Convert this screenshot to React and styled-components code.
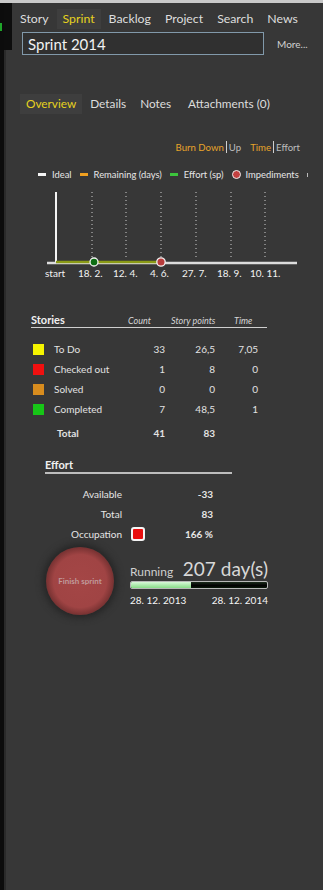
import React from 'react';
import styled, { createGlobalStyle } from 'styled-components';

const GlobalStyle = createGlobalStyle`
  html, body {
    margin: 0;
    padding: 0;
    background: #373737;
  }
  body {
    font-family: Lato, "Open Sans", "Liberation Sans", sans-serif;
    color: #dcdcdc;
  }
`;

const Frame = styled.div`
  display: flex;
  flex-direction: column;
  width: 323px;
  height: 890px;
  overflow: hidden;
  background: #c9c9c9;
  padding-top: 3px;
  box-sizing: border-box;
`;

const Body = styled.div`
  flex: 1;
  display: flex;
`;

const Rail = styled.div`
  width: 4px;
  background: #0c0c0c;
  position: relative;
  &::before {
    content: '';
    position: absolute;
    left: 0;
    top: 20px;
    width: 2px;
    height: 8px;
    background: #1fa52a;
  }
`;

const Panel = styled.div`
  flex: 1;
  position: relative;
  background: #373737;
  border-left: 2px solid #2a2a2a;
  &::before {
    content: '';
    position: absolute;
    left: -2px;
    top: 0;
    width: 8px;
    height: 47px;
    background: #0d0d0d;
  }
`;

const Nav = styled.nav`
  display: flex;
  gap: ${p => p.$gap ?? 2}px;
  padding: 4px 0 0 8px;
  height: 24px;
  align-items: center;
`;

const Tab = styled.div`
  font-size: ${p => p.$size || 12.3}px;
  padding: 2px 6px 3px;
  margin-left: ${p => p.$push || 0}px;
  color: ${p => (p.$active ? '#e6d21e' : '#dedede')};
  background: ${p => (p.$active ? '#3e3e3e' : 'transparent')};
  white-space: nowrap;
`;

const SearchRow = styled.div`
  display: flex;
  align-items: center;
  padding: 1px 0 0 16px;
  gap: 13px;
`;

const NameInput = styled.div`
  width: 242px;
  height: 23px;
  box-sizing: border-box;
  border: 1px solid #8199aa;
  background: #303030;
  color: #f2f2f2;
  font-size: 15px;
  padding-left: 5px;
  display: flex;
  align-items: center;
`;

const More = styled.span`
  font-size: 10px;
  color: #d0d0d0;
`;

const SubNav = styled(Nav)`
  padding: 39px 0 0 14px;
  height: 20px;
`;

const ChartModes = styled.div`
  display: flex;
  justify-content: flex-end;
  align-items: center;
  padding: 26px 23px 0 0;
  font-size: 9.6px;
  height: 14px;
`;

const Mode = styled.span`
  color: ${p => (p.$on ? '#e8a42a' : '#bdbdbd')};
  margin-left: ${p => p.$gap || 0}px;
`;

const Sep = styled.span`
  display: inline-block;
  width: 1px;
  height: 12px;
  background: #cfcfcf;
  margin: 0 2px;
`;

const Legend = styled.div`
  display: flex;
  align-items: center;
  padding: 15px 0 0 32px;
  font-size: 9.4px;
  color: #e6e6e6;
  height: 11px;
`;

const LegendItem = styled.span`
  display: flex;
  align-items: center;
  margin-right: 8px;
  white-space: nowrap;
`;

const Dash = styled.i`
  display: inline-block;
  width: 8px;
  height: 3px;
  background: ${p => p.$color};
  margin-right: 6px;
`;

const Dot = styled.i`
  display: inline-block;
  width: 7px;
  height: 7px;
  border-radius: 50%;
  background: #c44040;
  border: 1px solid #eee;
  margin-right: 5px;
`;

const Tick = styled.i`
  display: inline-block;
  width: 1px;
  height: 4px;
  background: #bbb;
`;

const Chart = styled.svg`
  display: block;
  margin-top: 5px;
`;

const Stories = styled.section`
  margin: 32px 0 0 25px;
  width: 236px;
`;

const StoriesHead = styled.div`
  display: flex;
  align-items: baseline;
  border-bottom: 1px solid #cfcfcf;
  padding-bottom: 1px;
  font-size: 9px;
  font-style: italic;
  color: #d6d6d6;
`;

const HeadTitle = styled.span`
  font-size: 11px;
  font-weight: bold;
  font-style: normal;
  color: #f0f0f0;
  width: ${p => p.$w}px;
`;

const HeadCol = styled.span`
  width: ${p => p.$w}px;
`;

const StoryRows = styled.div`
  display: grid;
  grid-template-columns: 23px 80px 31px 50px 43px;
  grid-auto-rows: 20px;
  align-items: center;
  margin-top: 11px;
  font-size: 10px;
  color: #e2e2e2;
`;

const Swatch = styled.i`
  display: block;
  width: 11px;
  height: 11px;
  margin-left: 2px;
  background: ${p => p.$color};
`;

const Num = styled.span`
  text-align: right;
  font-weight: ${p => (p.$bold ? 'bold' : 'normal')};
`;

const Label = styled.span`
  font-weight: ${p => (p.$bold ? 'bold' : 'normal')};
  padding-left: ${p => (p.$bold ? 3 : 0)}px;
`;

const TotalCell = styled.div`
  display: contents;
  & > * {
    margin-top: 7px;
  }
`;

const Effort = styled.section`
  margin: 19px 0 0 39px;
  width: 187px;
`;

const EffortHead = styled.div`
  font-size: 11px;
  font-weight: bold;
  color: #f0f0f0;
  border-bottom: 2px solid #bdbdbd;
  padding-bottom: 1px;
`;

const EffortRows = styled.div`
  display: grid;
  grid-template-columns: 77px 9px 14px 68px;
  grid-auto-rows: 20px;
  align-items: center;
  margin-top: 10px;
  font-size: 10px;
  color: #e6e6e6;
`;

const EffortLabel = styled.span`
  grid-column: 1;
  text-align: right;
`;

const EffortValue = styled.span`
  grid-column: 4;
  text-align: right;
  font-weight: bold;
`;

const Alarm = styled.i`
  grid-column: 3;
  display: block;
  width: 10px;
  height: 10px;
  border: 2px solid #f4f4f4;
  border-radius: 3px;
  background: #e80d0d;
`;

const Status = styled.section`
  display: flex;
  align-items: center;
  margin: 3px 0 0 40px;
  gap: 16px;
`;

const FinishButton = styled.div`
  width: 68px;
  height: 68px;
  border-radius: 50%;
  background: radial-gradient(circle, #a44646 0%, #a04444 55%, #783232 70%, #2a2222 100%);
  box-shadow: 0 0 7px 3px #252525;
  display: flex;
  align-items: center;
  justify-content: center;
  font-size: 8px;
  font-weight: bold;
  color: #c09a9a;
  white-space: nowrap;
`;

const Running = styled.div`
  width: 138px;
`;

const RunLine = styled.div`
  display: flex;
  align-items: baseline;
  justify-content: space-between;
  color: #cfcfcf;
  font-size: 12px;
`;

const Days = styled.span`
  font-size: 19px;
  color: #d8d8d8;
`;

const Bar = styled.div`
  height: 8px;
  margin-top: 1px;
  border: 1px solid #b8b8b8;
  border-radius: 2px;
  box-sizing: border-box;
  background: linear-gradient(#1a2a1a, #000 60%, #0a1a0a);
  overflow: hidden;
`;

const BarFill = styled.div`
  height: 100%;
  background: linear-gradient(#d8f8d8, #88dc88);
`;

const Dates = styled.div`
  display: flex;
  justify-content: space-between;
  margin-top: 5px;
  font-size: 10px;
  color: #f4f4f4;
`;

const ticks = [86, 120, 155, 190, 225, 259];
const xLabels = [
  ['start', 39],
  ['18. 2.', 72],
  ['12. 4.', 107],
  ['4. 6.', 144],
  ['27. 7.', 176],
  ['18. 9.', 211],
  ['10. 11.', 244],
];

function BurnChart() {
  return (
    <Chart width="317" height="96" viewBox="0 0 317 96">
      {ticks.map(x => (
        <line key={x} x1={x} y1="7" x2={x} y2="74" stroke="#cfcfcf" strokeWidth="1" strokeDasharray="1 3" />
      ))}
      <line x1="50" y1="7" x2="50" y2="78" stroke="#f4f4f4" strokeWidth="2" />
      <line x1="41" y1="78" x2="291" y2="78" stroke="#dcdcdc" strokeWidth="2.5" />
      <line x1="50" y1="77" x2="155" y2="77" stroke="#8a9a16" strokeWidth="2.5" />
      <circle cx="88" cy="77" r="4" fill="#0c6d12" stroke="#f2f2f2" strokeWidth="1.3" />
      <circle cx="155" cy="77" r="4.2" fill="#b83c3c" stroke="#f2f2f2" strokeWidth="1.3" />
      {xLabels.map(([t, x]) => (
        <text key={t} x={x} y="92" fill="#f2f2f2" fontSize="10" fontFamily="Lato, sans-serif">
          {t}
        </text>
      ))}
    </Chart>
  );
}

const storyRows = [
  ['To Do', '#f5f500', '33', '26,5', '7,05'],
  ['Checked out', '#f01010', '1', '8', '0'],
  ['Solved', '#d88c1e', '0', '0', '0'],
  ['Completed', '#17c617', '7', '48,5', '1'],
];

export default function App() {
  return (
    <>
      <GlobalStyle />
      <Frame>
        <Body>
          <Rail />
          <Panel>
            <Nav>
              <Tab>Story</Tab>
              <Tab $active>Sprint</Tab>
              <Tab>Backlog</Tab>
              <Tab>Project</Tab>
              <Tab>Search</Tab>
              <Tab>News</Tab>
            </Nav>
            <SearchRow>
              <NameInput>Sprint 2014</NameInput>
              <More>More...</More>
            </SearchRow>

            <SubNav $gap={2}>
              <Tab $active $size={11.8}>Overview</Tab>
              <Tab $size={11.8}>Details</Tab>
              <Tab $size={11.8}>Notes</Tab>
              <Tab $size={11.8} $push={3}>Attachments (0)</Tab>
            </SubNav>

            <ChartModes>
              <Mode $on>Burn Down</Mode>
              <Sep />
              <Mode>Up</Mode>
              <Mode $on $gap={9}>Time</Mode>
              <Sep />
              <Mode>Effort</Mode>
            </ChartModes>

            <Legend>
              <LegendItem><Dash $color="#f4f4f4" />Ideal</LegendItem>
              <LegendItem><Dash $color="#f0a020" />Remaining (days)</LegendItem>
              <LegendItem><Dash $color="#3cc43c" />Effort (sp)</LegendItem>
              <LegendItem><Dot />Impediments</LegendItem>
              <Tick />
            </Legend>

            <BurnChart />

            <Stories>
              <StoriesHead>
                <HeadTitle $w={97}>Stories</HeadTitle>
                <HeadCol $w={43}>Count</HeadCol>
                <HeadCol $w={63}>Story points</HeadCol>
                <HeadCol $w={30}>Time</HeadCol>
              </StoriesHead>
              <StoryRows>
                {storyRows.map(([name, color, count, sp, time]) => (
                  <React.Fragment key={name}>
                    <Swatch $color={color} />
                    <Label>{name}</Label>
                    <Num>{count}</Num>
                    <Num>{sp}</Num>
                    <Num>{time}</Num>
                  </React.Fragment>
                ))}
                <TotalCell>
                  <span />
                  <Label $bold>Total</Label>
                  <Num $bold>41</Num>
                  <Num $bold>83</Num>
                  <span />
                </TotalCell>
              </StoryRows>
            </Stories>

            <Effort>
              <EffortHead>Effort</EffortHead>
              <EffortRows>
                <EffortLabel>Available</EffortLabel>
                <EffortValue>-33</EffortValue>
                <EffortLabel>Total</EffortLabel>
                <EffortValue>83</EffortValue>
                <EffortLabel>Occupation</EffortLabel>
                <Alarm />
                <EffortValue>166 %</EffortValue>
              </EffortRows>
            </Effort>

            <Status>
              <FinishButton>Finish sprint</FinishButton>
              <Running>
                <RunLine>
                  <span>Running</span>
                  <Days>207 day(s)</Days>
                </RunLine>
                <Bar>
                  <BarFill style={{ width: '44%' }} />
                </Bar>
                <Dates>
                  <span>28. 12. 2013</span>
                  <span>28. 12. 2014</span>
                </Dates>
              </Running>
            </Status>
          </Panel>
        </Body>
      </Frame>
    </>
  );
}
